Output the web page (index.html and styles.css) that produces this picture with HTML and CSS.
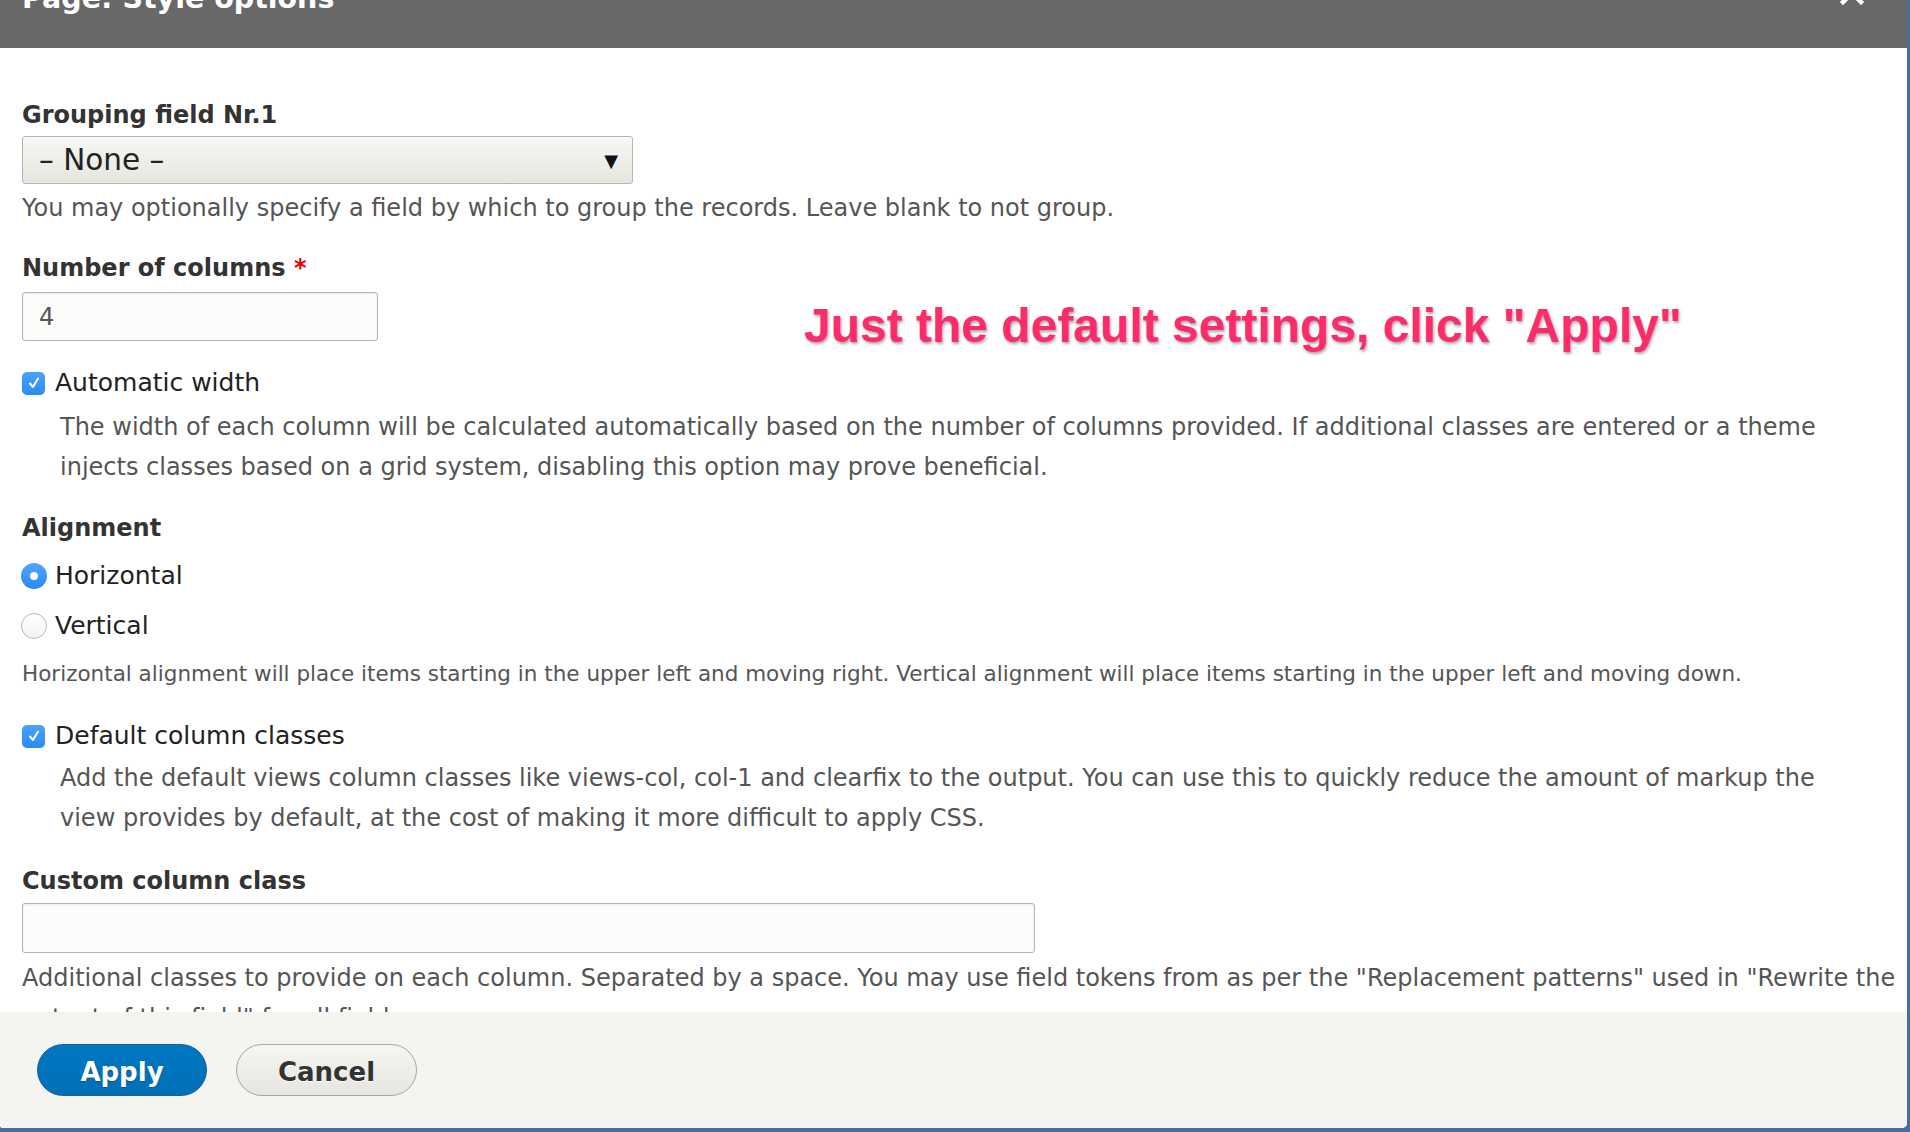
FILE: index.html
```html
<!DOCTYPE html>
<html lang="en">
<head>
<meta charset="utf-8">
<title>Page: Style options</title>
<link rel="stylesheet" href="styles.css">
</head>
<body>
<div class="dialog">
  <div class="dialog-header">
    <h1 class="dialog-title">Page: Style options</h1>
    <span class="dialog-close">
      <svg width="26" height="26" viewBox="0 0 26 26"><path d="M4 4 L22 22 M22 4 L4 22" stroke="#fff" stroke-width="4.5" stroke-linecap="square"/></svg>
    </span>
  </div>

  <div class="dialog-content">
    <label class="form-label">Grouping field Nr.1</label>
    <div class="select">
      <span>– None –</span>
      <span class="select-arrow">▼</span>
    </div>
    <p class="description desc-single">You may optionally specify a field by which to group the records. Leave blank to not group.</p>

    <label class="form-label label-gap">Number of columns <span class="required">*</span></label>
    <div class="text-input small-input">4</div>

    <div class="check-row row-gap">
      <span class="checkbox"><svg width="14" height="14" viewBox="0 0 14 14"><path d="M3 7.5 L6 11 L11 2.5" fill="none" stroke="#fff" stroke-width="2" stroke-linecap="round" stroke-linejoin="round"/></svg></span>
      <span class="option-label">Automatic width</span>
    </div>
    <p class="description indented">The width of each column will be calculated automatically based on the number of columns provided. If additional classes are entered or a theme injects classes based on a grid system, disabling this option may prove beneficial.</p>

    <label class="form-label alignment-gap">Alignment</label>
    <div class="check-row radio-first">
      <span class="radio radio-on"><span class="radio-dot"></span></span>
      <span class="option-label">Horizontal</span>
    </div>
    <div class="check-row radio-second">
      <span class="radio"></span>
      <span class="option-label">Vertical</span>
    </div>
    <p class="description small-desc">Horizontal alignment will place items starting in the upper left and moving right. Vertical alignment will place items starting in the upper left and moving down.</p>

    <div class="check-row row-gap2">
      <span class="checkbox"><svg width="14" height="14" viewBox="0 0 14 14"><path d="M3 7.5 L6 11 L11 2.5" fill="none" stroke="#fff" stroke-width="2" stroke-linecap="round" stroke-linejoin="round"/></svg></span>
      <span class="option-label">Default column classes</span>
    </div>
    <p class="description indented indented-2">Add the default views column classes like views-col, col-1 and clearfix to the output. You can use this to quickly reduce the amount of markup the view provides by default, at the cost of making it more difficult to apply CSS.</p>

    <label class="form-label label-gap2">Custom column class</label>
    <div class="text-input wide-input"></div>
    <p class="description last-desc">Additional classes to provide on each column. Separated by a space. You may use field tokens from as per the "Replacement patterns" used in "Rewrite the output of this field" for all fields.</p>
  </div>

  <div class="dialog-footer">
    <button class="btn btn-primary">Apply</button>
    <button class="btn btn-secondary">Cancel</button>
  </div>

  <div class="annotation">Just the default settings, click "Apply"</div>
</div>
</body>
</html>
```

FILE: styles.css
```css
html, body {
  margin: 0;
  padding: 0;
}
body {
  background: #44709d;
  width: 1910px;
  height: 1132px;
  overflow: hidden;
  font-family: "DejaVu Sans", "Liberation Sans", sans-serif;
  color: #333;
}
.dialog {
  position: relative;
  width: 1907px;
  height: 1128px;
  background: #fff;
  display: flex;
  flex-direction: column;
  overflow: hidden;
  border-bottom-right-radius: 5px;
  border-bottom-left-radius: 3px;
}
.dialog-header {
  flex: none;
  height: 48px;
  background: #686868;
  display: flex;
  justify-content: space-between;
  align-items: flex-start;
  padding: 0 42px 0 22px;
  overflow: hidden;
}
.dialog-title {
  margin: -15px 0 0 0;
  font-size: 28.5px;
  line-height: 28px;
  font-weight: bold;
  color: #fff;
}
.dialog-close {
  display: block;
  margin-top: -20px;
}
.dialog-content {
  flex: 1;
  overflow: hidden;
  padding: 52px 8px 0 22px;
}
.form-label {
  display: block;
  font-size: 24px;
  line-height: 30px;
  font-weight: bold;
  color: #333;
}
.required {
  color: #e00;
}
.select {
  margin-top: 6px;
  width: 611px;
  height: 48px;
  box-sizing: border-box;
  border: 1px solid #b4b4b0;
  border-radius: 3px;
  background: linear-gradient(#f7f7f4, #e6e6e0);
  display: flex;
  align-items: center;
  justify-content: space-between;
  padding: 0 14px 0 16px;
  font-size: 29.5px;
  color: #222;
}
.select-arrow {
  font-size: 18px;
  color: #111;
}
.description {
  margin: 0;
  font-size: 24px;
  line-height: 40px;
  color: #555;
}
.desc-single {
  margin-top: 4px;
}
.label-gap {
  margin-top: 25px;
}
.text-input {
  margin-top: 9px;
  box-sizing: border-box;
  border: 1px solid #b4b4b0;
  border-radius: 3px;
  background: #fcfcfa;
  box-shadow: inset 0 1px 2px rgba(0,0,0,0.08);
  font-size: 24px;
  color: #555;
  padding: 0 16px;
  display: flex;
  align-items: center;
}
.small-input {
  width: 356px;
  height: 49px;
}
.wide-input {
  width: 1013px;
  height: 50px;
  margin-top: 7px;
}
.check-row {
  display: flex;
  align-items: center;
  height: 30px;
  gap: 10px;
}
.row-gap {
  margin-top: 27px;
}
.row-gap2 {
  margin-top: 32px;
}
.checkbox {
  width: 23px;
  height: 23px;
  box-sizing: border-box;
  border-radius: 5px;
  background: linear-gradient(#4aa3fb, #2a8bf2);
  display: flex;
  align-items: center;
  justify-content: center;
  flex: none;
}
.option-label {
  font-size: 25px;
  color: #222;
  line-height: 30px;
}
.indented {
  margin-left: 38px;
  margin-right: 54px;
  margin-top: 9px;
}
.indented-2 {
  margin-top: 7px;
}
.alignment-gap {
  margin-top: 26px;
}
.radio-first {
  margin-top: 18px;
}
.radio-second {
  margin-top: 20px;
}
.radio {
  width: 26px;
  height: 26px;
  box-sizing: border-box;
  border-radius: 50%;
  border: 1px solid #b9b9b9;
  background: linear-gradient(#fff, #f2f2f2);
  margin-left: -1px;
  margin-right: -2px;
  flex: none;
  display: flex;
  align-items: center;
  justify-content: center;
}
.radio-on {
  border: none;
  background: linear-gradient(#4ea6fb, #2a8af2);
}
.radio-dot {
  width: 8px;
  height: 8px;
  border-radius: 50%;
  background: #fff;
}
.small-desc {
  font-size: 21.5px;
  line-height: 30px;
  margin-top: 18px;
}
.label-gap2 {
  margin-top: 28px;
}
.last-desc {
  margin-top: 5px;
}
.dialog-footer {
  flex: none;
  height: 116px;
  box-sizing: border-box;
  background: #f4f4f1;
  padding: 32px 0 0 37px;
  display: flex;
  align-items: flex-start;
  gap: 29px;
}
.btn {
  height: 52px;
  border-radius: 26px;
  font-family: "DejaVu Sans", sans-serif;
  font-weight: bold;
  font-size: 26px;
  padding: 3px 0 0 0;
  box-sizing: border-box;
}
.btn-primary {
  width: 170px;
  background: linear-gradient(#0077c2, #006fb8);
  border: 1px solid #1d5f98;
  color: #fff;
  text-shadow: 0 1px 1px #1a4f7f;
}
.btn-secondary {
  width: 181px;
  background: linear-gradient(#f6f6f2, #e6e5df);
  border: 1px solid #a6a6a6;
  color: #333;
  text-shadow: 0 1px 0 #fff;
}
.annotation {
  position: absolute;
  left: 804px;
  top: 297px;
  font-family: "Liberation Sans", Arial, sans-serif;
  font-weight: bold;
  font-size: 48px;
  line-height: 58px;
  color: #fb2c6c;
  -webkit-text-stroke: 8px #fff;
  paint-order: stroke fill;
  text-shadow: 1px 2px 3px rgba(0,0,0,0.35);
  white-space: nowrap;
}
```
